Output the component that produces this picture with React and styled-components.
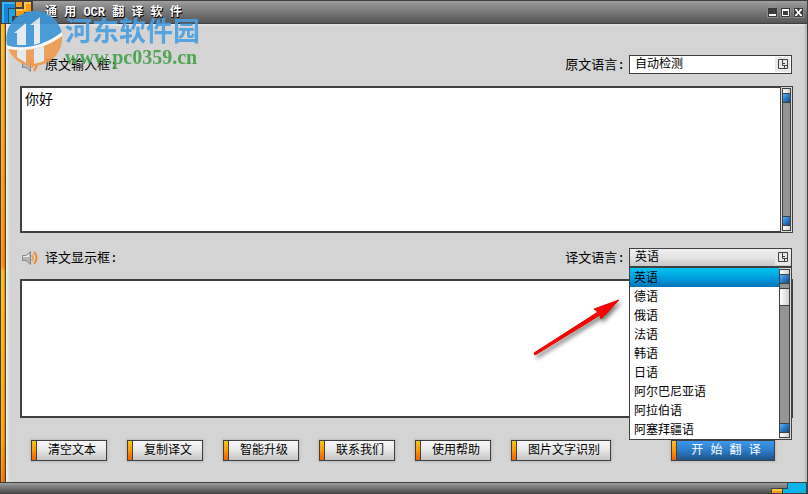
import { useState } from "react";
import styled, { createGlobalStyle, css } from "styled-components";

// #region styles

const GlobalStyle = createGlobalStyle`
  * {
    box-sizing: border-box;
  }
  body {
    margin: 0;
    color: #000;
    font: 12px/18px "Liberation Mono", "Noto Sans CJK SC", monospace;
  }
  button, select, textarea {
    font: inherit;
    color: inherit;
    margin: 0;
  }
`;

const Window = styled.div`
  position: relative;
  display: flex;
  flex-direction: column;
  min-height: 100vh;
  background: #d4d4d4;
  border-right: 1px solid #404040;
`;

const TitleBar = styled.header`
  display: flex;
  align-items: center;
  height: 24px;
  padding-right: 4px;
  border-top: 1px solid #404040;
  border-bottom: 1px solid #404040;
  background: linear-gradient(#a0a0a0, #8c8c8c 20%, #565656);
`;

const Title = styled.h1`
  flex: 1;
  margin: 0 0 0 12px;
  padding-top: 2px;
  color: #fff;
  font-size: 12px;
  line-height: 18px;
  font-weight: bold;
  text-shadow: 1px 1px 0 #000, 0 1px 0 #000;
`;

const WindowButtons = styled.div`
  display: flex;
  gap: 4px;
`;

const WindowButton = styled.button`
  display: flex;
  width: 9px;
  height: 9px;
  padding: 0;
  border: 0;
  background: #3c3c3c;
  outline: 1px solid #8a8a8a;
`;

const Body = styled.div`
  display: flex;
  flex: 1;
`;

const SideStrip = styled.div`
  width: 6px;
  border-left: 1px solid #404040;
  border-right: 1px solid #404040;
  background:
    linear-gradient(90deg, #ffd04055, transparent 50%, #a84c0066),
    linear-gradient(#ffc020, #ff9000 53%, #ffc020 54%, #ffa800 90%, #f47800);
`;

const Main = styled.main`
  display: flex;
  flex: 1;
  flex-direction: column;
  min-width: 0;
  padding: 31px 14px 21px;
  box-shadow: inset 4px 0 3px -2px #f0f0f0, inset -3px 0 2px -1px #b8b8b8,
    inset 0 2px 1px #e4e4e4;
`;

const PaneHeader = styled.div`
  display: flex;
  align-items: center;
  height: 19px;
  margin-bottom: 12px;
  font-size: 13px;
`;

const LowerPaneHeader = styled(PaneHeader)`
  margin-top: 15px;
`;

const FieldLabel = styled.label`
  padding-top: 2px;
`;

const PaneLabel = styled(FieldLabel)`
  flex: 1;
`;

const IconButton = styled.button`
  display: flex;
  width: 25px;
  padding: 0 0 0 1px;
  border: 0;
  background: none;
`;

const Combo = styled.div`
  position: relative;
  width: 163px;
  height: 19px;
  margin-right: 1px;
  margin-left: 4px;
  font-size: 12px;
`;

const Select = styled.select`
  display: block;
  width: 100%;
  height: 19px;
  padding: 0 20px 0 5px;
  border: 1px solid #404040;
  border-radius: 0;
  outline: 0;
  appearance: none;
  background: ${({ $open }) =>
    $open ? "linear-gradient(#f0f0f0, #e4e4e4 50%, #c8c8c8)" : "#fff"};
  line-height: 18px;
`;

const ComboMark = styled.svg`
  position: absolute;
  top: 2px;
  right: 2px;
  pointer-events: none;
`;

const Popup = styled.div`
  position: absolute;
  z-index: 2;
  top: 19px;
  left: 0;
  display: flex;
  width: 100%;
  border: 1px solid #404040;
  background: #fff;
`;

const Options = styled.ul`
  flex: 1;
  margin: 0;
  padding: 0;
  list-style: none;
`;

const Option = styled.li`
  height: 19px;
  padding: 1px 0 0 4px;
  line-height: 20px;
  cursor: default;
  ${({ $selected }) =>
    $selected &&
    css`
      background: linear-gradient(#04c4f0, #0098dc 60%, #0074b4);
    `}
`;

const Track = styled.div`
  display: flex;
  flex-direction: column;
  width: 13px;
  padding: 1px;
  border: 1px solid #404040;
  background: #d8d8d8;
`;

const ListTrack = styled(Track)`
  width: 12px;
  padding: 1px 1px 1px 0;
  border: 0;
`;

const TrackInner = styled.div`
  display: flex;
  flex: 1;
  flex-direction: column;
  border: 1px solid #404040;
  background: #949494;
`;

const TrackCap = styled.div`
  height: 4px;
  background: linear-gradient(90deg, #fff, #d0d0d0);
`;

const TrackButton = styled.button`
  height: 10px;
  padding: 0;
  border: 0;
  border-top: 1px solid #404040;
  border-bottom: 1px solid #404040;
  background: linear-gradient(135deg, #64b0f4, #2c80d0 45%, #144c80);
`;

const TrackSpace = styled.div`
  flex: 1;
`;

const TrackThumb = styled.div`
  height: 18px;
  margin-top: 4px;
  border-top: 1px solid #404040;
  border-bottom: 1px solid #404040;
  background: linear-gradient(90deg, #fff, #d0d0d0);
`;

const Pane = styled.div`
  display: flex;
  flex: 1 1 ${({ $basis }) => $basis};
  border: solid #404040;
  border-width: 2px 0 2px 2px;
`;

const TextBox = styled.textarea`
  display: block;
  flex: 1;
  min-width: 0;
  padding: 2px 3px;
  border: 0;
  border-radius: 0;
  outline: 0;
  resize: none;
  overflow: hidden;
  background: #fff;
  font-size: 14px;
  line-height: 20px;
`;

const PaneScroll = styled.div`
  display: flex;
  margin: -2px 0;
`;

const Actions = styled.div`
  display: flex;
  gap: 20px;
  padding: 0 18px 0 11px;
  margin-top: 22px;
`;

const ActionButton = styled.button`
  height: 21px;
  min-width: 76px;
  padding: 1px 10px 0 16px;
  border: 1px solid #404040;
  background:
    linear-gradient(#404040, #404040) 4px 0 / 1px 100% no-repeat,
    linear-gradient(#ffc020, #ff9800 50%, #f06000) 0 0 / 4px 100% no-repeat,
    linear-gradient(#f8f8f8, #e8e8e8 45%, #c4c4c4);
  box-shadow: 0 0 2px 1px #bcbcbc;
  line-height: 18px;
  white-space: nowrap;
`;

const StartButton = styled(ActionButton)`
  min-width: 104px;
  margin-left: auto;
  color: #fff;
  background:
    linear-gradient(#404040, #404040) 4px 0 / 1px 100% no-repeat,
    linear-gradient(#ffc020, #ff9800 50%, #f06000) 0 0 / 4px 100% no-repeat,
    linear-gradient(#3c98ec, #2c7cc8 50%, #1c5488);
`;

const StatusBar = styled.footer`
  display: flex;
  justify-content: flex-end;
  height: 12px;
  border-top: 1px solid #404040;
  border-bottom: 1px solid #404040;
  background: linear-gradient(#a0a0a0, #888 25%, #4c4c4c);
`;

const Watermark = styled.div`
  position: absolute;
  z-index: 1;
  top: 11px;
  left: 6px;
  display: flex;
  gap: 2px;
  opacity: 0.9;
  pointer-events: none;
`;

const WatermarkName = styled.div`
  padding-top: 3px;
  color: #4a9ee0;
  font: bold 27px/32px "Noto Sans CJK SC", sans-serif;
`;

const WatermarkSite = styled.div`
  color: #43a047;
  font: bold 20px/22px "Liberation Serif", serif;
`;

const Pointer = styled.svg`
  position: absolute;
  z-index: 3;
  top: 292px;
  left: 526px;
  pointer-events: none;
  filter: drop-shadow(2px 3px 2px #0008);
`;
// #endregion

const TARGET_LANGUAGES = [
  "英语",
  "德语",
  "俄语",
  "法语",
  "韩语",
  "日语",
  "阿尔巴尼亚语",
  "阿拉伯语",
  "阿塞拜疆语",
];

const ACTIONS = [
  "清空文本",
  "复制译文",
  "智能升级",
  "联系我们",
  "使用帮助",
  "图片文字识别",
];

const CornerLogo = () => (
  <svg width="33" height="22" viewBox="0 1 33 22" aria-hidden="true">
    <path d="M0 0H33V13H25V17H15V23H0Z" fill="#404040" />
    <path d="M2 2H15V8H8V23H2Z" fill="#1785d8" />
    <path d="M2 2H15V4H4V23H2Z" fill="#35b4f6" />
    <path d="M9 9H15V16H12V23H9Z" fill="#1ba4ea" />
    <path d="M16 2H22V7H16Z" fill="#ff9a10" />
    <path d="M24 2H31V12H24V16H16V9H24Z" fill="#ff9a10" />
    <path d="M24 2H31V4H26V11H24ZM16 9H23V11H16Z" fill="#ffc64c" />
  </svg>
);

const SpeakerIcon = () => (
  <svg width="17" height="14" viewBox="0 0 17 14" aria-hidden="true">
    <path d="M1.500 4.500H5L9.500 0.500V13.500L5 9.500H1.500Z" fill="#b4b4b4" stroke="#888" />
    <path d="M2 5H5L8 3V6H2Z" fill="#ececec" />
    <path d="M11 4Q13 7 11 10" fill="none" stroke="#f0a050" strokeWidth="2" />
    <path d="M13 1Q18 7 13 13" fill="none" stroke="#ee8a30" strokeWidth="2" />
  </svg>
);

const WatermarkLogo = () => (
  <svg width="57" height="56" viewBox="0 0 57 56" aria-hidden="true">
    <path d="M1 34A27 27 0 1 1 56 22Q40 36 20 36Q8 37 1 34Z" fill="#3d96d8" />
    <path d="M2 37Q30 42 56 24A28 28 0 0 1 28 55A27 27 0 0 1 2 37Z" fill="#f09a50" />
    <path
      d="M8 22L20 12V34H11V22ZM24 14L34 6V32L28 34V14ZM11 39H20V52L11 46ZM28 38L38 35V50L28 53Z"
      fill="#e6eef4"
    />
    <path d="M1 35Q30 41 56 21V25Q32 43 2 38Z" fill="#fff" />
  </svg>
);

const DropMark = () => (
  <ComboMark width="15" height="15" viewBox="0 0 15 15" aria-hidden="true">
    <path d="M0 0H15V15H0Z" fill="#e8e8e8" />
    <path
      d="M3.500 2.500H12.500V11.500H3.500ZM7.500 3V8.500H12M7 6.500H10M9.500 9V11"
      fill="none"
      stroke="#404040"
    />
  </ComboMark>
);

const ScrollTrack = ({ as: Frame = Track, thumb }) => (
  <Frame>
    <TrackInner>
      <TrackCap />
      <TrackButton type="button" aria-label="向上滚动" />
      {thumb && <TrackThumb />}
      <TrackSpace />
      <TrackButton type="button" aria-label="向下滚动" />
      <TrackCap />
    </TrackInner>
  </Frame>
);

const App = () => {
  const [source, setSource] = useState("你好");
  const [target, setTarget] = useState("英语");
  const [open, setOpen] = useState(true);

  const pick = (language) => {
    setTarget(language);
    setOpen(false);
  };

  return (
    <>
      <GlobalStyle />
      <Window>
        <TitleBar>
          <CornerLogo />
          <Title>通 用 OCR 翻 译 软 件</Title>
          <WindowButtons>
            <WindowButton type="button" aria-label="最小化">
              <svg width="9" height="9" aria-hidden="true">
                <path d="M1 6H8V8H1Z" fill="#fff" />
              </svg>
            </WindowButton>
            <WindowButton type="button" aria-label="最大化">
              <svg width="9" height="9" aria-hidden="true">
                <path d="M1 1H8V8H1ZM2 3V7H7V3Z" fill="#fff" fillRule="evenodd" />
              </svg>
            </WindowButton>
            <WindowButton type="button" aria-label="关闭">
              <svg width="9" height="9" aria-hidden="true">
                <path
                  d="M1 1H3L4 3H5L6 1H8V2L6 4V5L8 7V8H6L5 6H4L3 8H1V7L3 5V4L1 2Z"
                  fill="#fff"
                />
              </svg>
            </WindowButton>
          </WindowButtons>
        </TitleBar>

        <Body>
          <SideStrip />
          <Main>
            <PaneHeader>
              <IconButton type="button" aria-label="朗读原文">
                <SpeakerIcon />
              </IconButton>
              <PaneLabel htmlFor="source-text">原文输入框:</PaneLabel>
              <FieldLabel htmlFor="source-language">原文语言:</FieldLabel>
              <Combo>
                <Select id="source-language" defaultValue="自动检测">
                  <option>自动检测</option>
                  {TARGET_LANGUAGES.map((language) => (
                    <option key={language}>{language}</option>
                  ))}
                </Select>
                <DropMark />
              </Combo>
            </PaneHeader>
            <Pane $basis="147px">
              <TextBox
                id="source-text"
                spellCheck={false}
                value={source}
                onChange={(e) => setSource(e.target.value)}
              />
              <PaneScroll>
                <ScrollTrack />
              </PaneScroll>
            </Pane>

            <LowerPaneHeader>
              <IconButton type="button" aria-label="朗读译文">
                <SpeakerIcon />
              </IconButton>
              <PaneLabel htmlFor="target-text">译文显示框:</PaneLabel>
              <FieldLabel htmlFor="target-language">译文语言:</FieldLabel>
              <Combo>
                <Select
                  id="target-language"
                  $open={open}
                  value={target}
                  onChange={(e) => setTarget(e.target.value)}
                  onMouseDown={(e) => {
                    // the list below replaces the native popup
                    e.preventDefault();
                    setOpen(!open);
                  }}
                >
                  {TARGET_LANGUAGES.map((language) => (
                    <option key={language}>{language}</option>
                  ))}
                </Select>
                <DropMark />
                {open && (
                  <Popup>
                    <Options role="listbox" aria-label="译文语言">
                      {TARGET_LANGUAGES.map((language) => (
                        <Option
                          key={language}
                          role="option"
                          aria-selected={language === target}
                          $selected={language === target}
                          onClick={() => pick(language)}
                        >
                          {language}
                        </Option>
                      ))}
                    </Options>
                    <ScrollTrack as={ListTrack} thumb />
                  </Popup>
                )}
              </Combo>
            </LowerPaneHeader>
            <Pane $basis="139px">
              <TextBox id="target-text" readOnly />
              <PaneScroll>
                <ScrollTrack />
              </PaneScroll>
            </Pane>

            <Actions>
              {ACTIONS.map((label) => (
                <ActionButton key={label} type="button">
                  {label}
                </ActionButton>
              ))}
              <StartButton type="button">开 始 翻 译</StartButton>
            </Actions>
          </Main>
        </Body>

        <StatusBar>
          <svg width="36" height="11" viewBox="0 0 36 11" aria-hidden="true">
            <path d="M0 5H16V0H36V11H0Z" fill="#404040" />
            <path d="M17 0H35V10H12V6H17Z" fill="#08b4e8" />
            <path d="M1 6H11V10H1Z" fill="#ff9a10" />
            <path d="M1 6H11V8H1Z" fill="#ffc64c" />
          </svg>
        </StatusBar>

        <Watermark>
          <WatermarkLogo />
          <div>
            <WatermarkName>河东软件园</WatermarkName>
            <WatermarkSite>www.pc0359.cn</WatermarkSite>
          </div>
        </Watermark>

        <Pointer width="100" height="70" viewBox="0 0 100 70" aria-hidden="true">
          <path
            d="M8 61L72 20L68 17L93 8L75 27L74 23L9 63Z"
            fill="#f00"
            stroke="#e80000"
            strokeLinejoin="round"
          />
        </Pointer>
      </Window>
    </>
  );
};

export default App;
